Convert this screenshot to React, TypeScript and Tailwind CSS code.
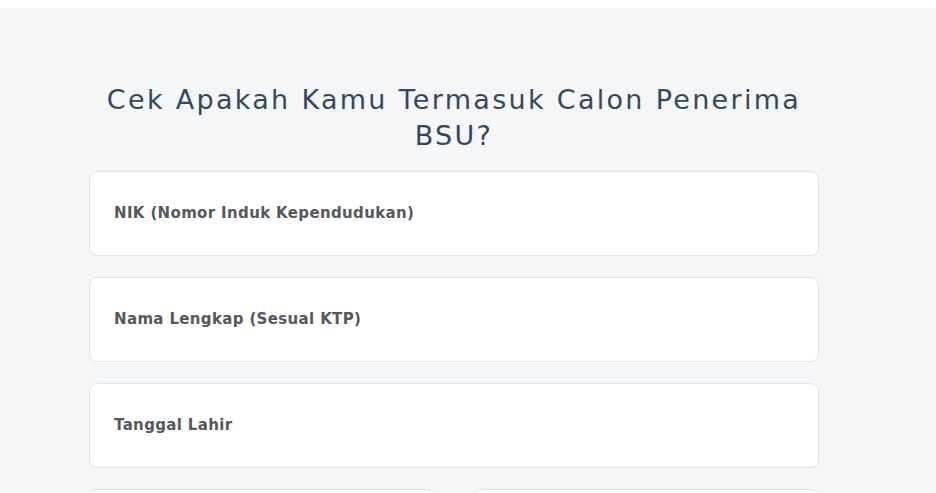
export default function App() {
  const fields = ['NIK (Nomor Induk Kependudukan)', 'Nama Lengkap (Sesual KTP)', 'Tanggal Lahir']

  return (
    <div className="min-h-screen bg-[#f5f6f8]">
      <div className="h-2 bg-white" />
      <div className="ml-[89px] w-[730px] pt-[74px]">
        <h1 className="text-center text-[27px] leading-[36px] tracking-[2.3px] text-[#34495e] font-['DejaVu_Sans',sans-serif]">
          Cek Apakah Kamu Termasuk Calon Penerima BSU?
        </h1>
        <div className="mt-[17px] flex flex-col gap-[21px]">
          {fields.map((f) => (
            <div
              key={f}
              className="flex h-[85px] items-center rounded-[8px] border border-[#dde4ec] bg-white px-6"
            >
              <span className="text-[15px] font-bold tracking-[0.35px] text-[#55585c] font-['DejaVu_Sans',sans-serif]">{f}</span>
            </div>
          ))}
          <div className="grid grid-cols-2 gap-[41px]">
            <div className="h-[85px] rounded-[8px] border border-[#dde4ec] bg-white" />
            <div className="h-[85px] rounded-[8px] border border-[#dde4ec] bg-white" />
          </div>
        </div>
      </div>
    </div>
  )
}
